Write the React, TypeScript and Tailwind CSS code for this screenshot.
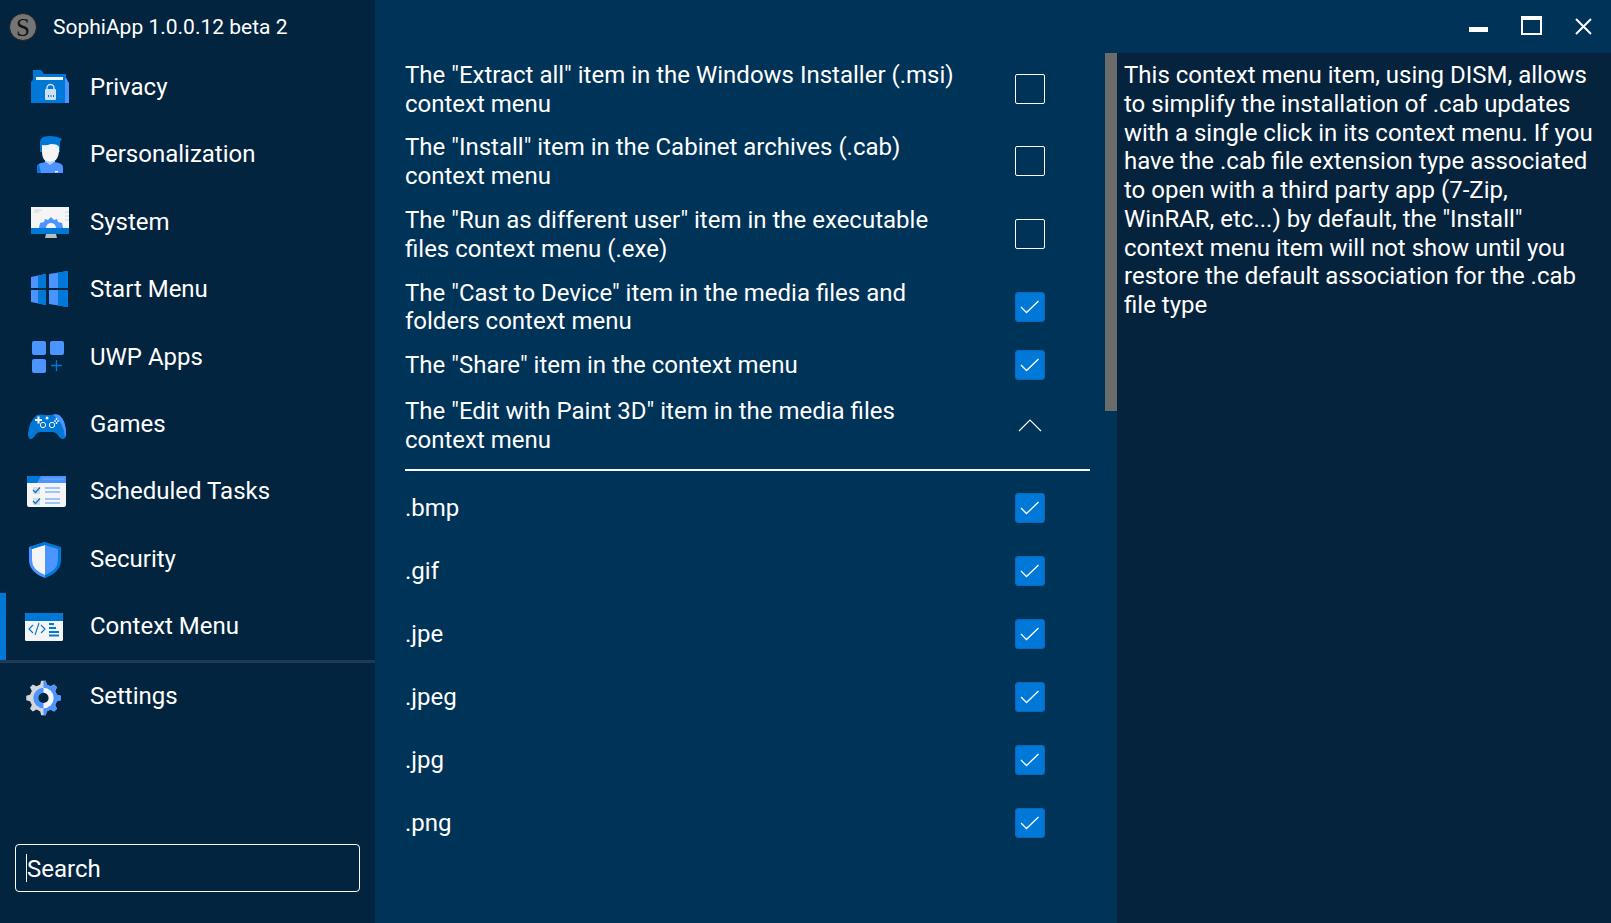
import React from 'react';

const BLUE = '#4c94ff';
const DARK = '#0078d7';
const LIGHT = '#f5f5f5';

const Svg = ({ children }: { children: React.ReactNode }) => (
  <svg width="48" height="48" viewBox="0 0 48 48" className="shrink-0">
    {children}
  </svg>
);

const PrivacyIcon = () => (
  <Svg>
    <path d="M12 7h8l3 4h22v12H12z" fill={DARK} />
    <rect x="15" y="14" width="27" height="4" fill={LIGHT} />
    <path d="M10 40V20q0-3 3-3h31v23z" fill={DARK} />
    <path d="M44 15h1l3 5v20h-4z" fill={BLUE} />
    <path d="M26 26v-1a3.500 3.500 0 0 1 7 0v1" fill="none" stroke="#cfe0f5" strokeWidth="1.400" />
    <rect x="24" y="26" width="11" height="11" rx="1" fill="#cfe0f5" />
    <rect x="27" y="32" width="1" height="2" fill={DARK} />
    <rect x="29.500" y="32" width="1" height="2" fill={DARK} />
    <rect x="32" y="32" width="1" height="2" fill={DARK} />
  </Svg>
);

const PersonIcon = () => (
  <Svg>
    <path d="M19 22v-10q0-6 9-6 8 0 13 3l-2 3v10z" fill={DARK} />
    <path d="M21 15q4 1 9-1 7 0 8 3v5q-1 9-8 11h-2q-7-2-7-11z" fill={LIGHT} />
    <path d="M24 30q5 3 10 0v4l-5 3-5-3z" fill="#b7d3f7" />
    <path d="M16 43v-5q0-4 4-5l5-1 4 3 4-3 5 1q4 1 4 5v5z" fill={BLUE} />
    <path d="M16 43v-5q0-3 2-4l2 9z" fill={DARK} />
    <rect x="34" y="41" width="3" height="1.500" fill={LIGHT} />
  </Svg>
);

const SystemIcon = () => (
  <Svg>
    <rect x="10" y="9" width="40" height="21" fill={LIGHT} />
    <rect x="10" y="30" width="40" height="6" fill={DARK} />
    <path d="M25 36h10l1 4H24z" fill="#bdbdbd" />
    <path d="M18 30l1-5 4-1 1-3 3 1 3-3 3 3 3-1 1 3 4 1 1 5z" fill={BLUE} />
    <path d="M25 30a5 5 0 0 1 10 0z" fill={LIGHT} />
    <path d="M13 12h8M13 14h5M44 14h4M44 18h4M44 22h4" stroke="#cccccc" strokeWidth="0.800" />
  </Svg>
);

const StartIcon = () => (
  <Svg>
    <path d="M10 12l15-3v14H10z" fill={BLUE} />
    <path d="M17 10.500l8-1.500v14h-8z" fill={DARK} />
    <path d="M28 9l19-3v17H28z" fill={BLUE} />
    <path d="M37 7.500l10-1.500v17H37z" fill={DARK} />
    <path d="M10 25h15v15l-15-3z" fill={BLUE} />
    <path d="M17 25h8v15l-8-1.500z" fill={DARK} />
    <path d="M28 25h19v17l-19-3z" fill={BLUE} />
    <path d="M37 25h10v17l-10-1.500z" fill={DARK} />
  </Svg>
);

const UwpIcon = () => (
  <Svg>
    <rect x="11" y="8" width="14" height="14" rx="2" fill={BLUE} />
    <rect x="29" y="8" width="14" height="14" rx="2" fill={BLUE} />
    <rect x="11" y="26" width="14" height="14" rx="2" fill={BLUE} />
    <path d="M35.500 27v11M30 32.500h11" stroke={DARK} strokeWidth="1.300" />
  </Svg>
);

const GamesIcon = () => (
  <Svg>
    <path d="M7 34q1-13 9-19 4-1 8 0h6q5-1 8 0 7 5 7 19 0 5-3 5-3 0-6-5-2-2-5-2H20q-3 0-5 2-3 5-5 5-3 0-3-5z" fill={DARK} />
    <path d="M32 14.500q3-.5 6 .5 7 5 7 19 0 2-1 3-1-14-12-22.500z" fill={BLUE} />
    <path d="M14 20h7M17.500 16.500v7" stroke={LIGHT} strokeWidth="2.200" />
    <circle cx="26" cy="18" r="1.500" fill={LIGHT} />
    <circle cx="22" cy="25" r="2.700" fill="none" stroke={LIGHT} strokeWidth="1" />
    <circle cx="31" cy="25" r="2.700" fill="none" stroke={LIGHT} strokeWidth="1" />
    <circle cx="34" cy="21" r="0.900" fill={LIGHT} />
    <circle cx="37" cy="21" r="0.900" fill={LIGHT} />
    <circle cx="35.500" cy="23" r="0.900" fill={LIGHT} />
    <circle cx="35.500" cy="19" r="0.900" fill={LIGHT} />
  </Svg>
);

const TasksIcon = () => (
  <Svg>
    <g transform="translate(0 1)">
      <rect x="6" y="8" width="39" height="31" rx="2" fill={LIGHT} />
      <path d="M6 15v-5q0-2 2-2h35q2 0 2 2v5z" fill={BLUE} />
      <path d="M6 15v-5q0-2 2-2h12l-4 7z" fill={DARK} />
      <path d="M22 11h21" stroke="#8dbcff" strokeWidth="0.700" />
      <rect x="12" y="19" width="7" height="7" fill="#dddddd" />
      <rect x="12" y="30" width="7" height="7" fill="#dddddd" />
      <path d="M12 22l2.500 2.500L19 19.500M12 33l2.500 2.500L19 30.500" fill="none" stroke={DARK} strokeWidth="1.300" />
      <path d="M24 20h15M24 24h15M24 31h15M24 35h15" stroke={BLUE} strokeWidth="1.100" />
    </g>
  </Svg>
);

const SecurityIcon = () => (
  <Svg>
    <g transform="translate(0 -1)">
      <path d="M24 8L8 13v13q0 12 16 18z" fill={BLUE} />
      <path d="M24 8l16 5v13q0 12-16 18z" fill={DARK} />
      <path d="M24 11l-13 4v11q0 10 13 15z" fill={LIGHT} />
      <path d="M24 11l13 4v11q0 10-13 15z" fill={BLUE} />
      <path d="M24 8L8 13l3 2 13-4z" fill={DARK} />
    </g>
  </Svg>
);

const ContextIcon = () => (
  <Svg>
    <rect x="4" y="11" width="38" height="28" rx="1.500" fill={LIGHT} />
    <path d="M4 19v-6.500q0-1.500 1.500-1.500h35q1.500 0 1.500 1.500V19z" fill={DARK} />
    <path d="M12 23l-4 4 4 4M20 23l4 4-4 4M18 21l-4 12" fill="none" stroke={DARK} strokeWidth="1.100" />
    <path d="M28 22h5M28 26h7M28 30h10M28 33.500h10" stroke={DARK} strokeWidth="2" />
  </Svg>
);

const SettingsIcon = () => (
  <Svg>
    <g transform="translate(-0.300 3.200) scale(0.930)">
      <path
        d="M22 6h5l1 4 4 2 4-2 3 3-2 4 2 4 4 1v5l-4 1-2 4 2 4-3 3-4-2-4 2-1 4h-5l-1-4-4-2-4 2-3-3 2-4-2-4-4-1v-5l4-1 2-4-2-4 3-3 4 2 4-2z"
        fill="#d6d6d6"
      />
      <path d="M24.500 6H27l1 4 4 2 4-2 3 3-2 4 2 4 4 1v5l-4 1-2 4 2 4-3 3-4-2-4 2-1 4h-2.500z" fill={BLUE} />
      <circle cx="24.500" cy="24.500" r="11" fill={LIGHT} />
      <path d="M24.500 13.500a11 11 0 0 0 0 22z" fill={BLUE} />
      <circle cx="24.500" cy="24.500" r="5.500" fill="#03243f" />
    </g>
  </Svg>
);

const menu = [
  { label: 'Privacy', icon: <PrivacyIcon /> },
  { label: 'Personalization', icon: <PersonIcon /> },
  { label: 'System', icon: <SystemIcon /> },
  { label: 'Start Menu', icon: <StartIcon /> },
  { label: 'UWP Apps', icon: <UwpIcon /> },
  { label: 'Games', icon: <GamesIcon /> },
  { label: 'Scheduled Tasks', icon: <TasksIcon /> },
  { label: 'Security', icon: <SecurityIcon /> },
  { label: 'Context Menu', icon: <ContextIcon /> },
];

const MenuRow = ({ label, icon, active }: { label: string; icon: React.ReactNode; active?: boolean }) => (
  <div className="relative flex h-[67.4px] items-center pl-[21px]">
    {active && <div className="absolute left-0 top-0 h-full w-[6px] bg-[#0078d7]" />}
    {icon}
    <span className="ml-[21px] text-[24px] text-white">{label}</span>
  </div>
);

const Checkbox = ({ checked }: { checked?: boolean }) =>
  checked ? (
    <div className="flex h-[30px] w-[30px] items-center justify-center rounded-[3px] border border-[#0a68b8] bg-[#0078d7]">
      <svg width="20" height="16" viewBox="0 0 20 16">
        <path d="M1 8l5.500 5.500L18.500 2" fill="none" stroke="#ffffff" strokeWidth="1.300" />
      </svg>
    </div>
  ) : (
    <div className="h-[30px] w-[30px] -translate-y-[1px] rounded-[2px] border border-white" />
  );

const settings = [
  { text: ['The "Extract all" item in the Windows Installer (.msi)', 'context menu'], checked: false },
  { text: ['The "Install" item in the Cabinet archives (.cab)', 'context menu'], checked: false },
  { text: ['The "Run as different user" item in the executable', 'files context menu (.exe)'], checked: false },
  { text: ['The "Cast to Device" item in the media files and', 'folders context menu'], checked: true },
  { text: ['The "Share" item in the context menu'], checked: true },
];

const extensions = ['.bmp', '.gif', '.jpe', '.jpeg', '.jpg', '.png'];

const App = () => {
  return (
    <div className="flex h-[923px] w-[1611px] overflow-hidden bg-[#003358] font-['Roboto',sans-serif] text-white">
      {/* Sidebar */}
      <aside className="flex w-[375px] shrink-0 flex-col bg-[#03243f]">
        <div className="flex h-[53.4px] items-center pl-[9px] pt-[1px]">
          <div className="flex h-[28px] w-[28px] items-center justify-center rounded-full border border-[#222222] bg-[#757575] font-['Liberation_Serif',serif] text-[25px] leading-none text-[#111111]">
            S
          </div>
          <span className="ml-[16px] translate-y-[1px] text-[21px]">SophiApp 1.0.0.12 beta 2</span>
        </div>
        {menu.map((item) => (
          <MenuRow key={item.label} label={item.label} icon={item.icon} active={item.label === 'Context Menu'} />
        ))}
        <div className="h-[2.6px] bg-[#1f3a54]" />
        <MenuRow label="Settings" icon={<SettingsIcon />} />
        <div className="mt-auto px-[15px] pb-[31px]">
          <div className="flex h-[48px] items-center rounded-[4px] border border-white pl-[10px] text-[24px]">
            <span className="h-[28px] w-px bg-white" />
            <span className="translate-y-[1px]">Search</span>
          </div>
        </div>
      </aside>

      <div className="flex min-w-0 flex-1 flex-col">
        {/* Window controls */}
        <div className="flex h-[53px] items-center justify-end pr-[17px]">
          <div className="mt-[1px] h-[5px] w-[19px] translate-y-[2px] bg-white" />
          <div className="ml-[33px] h-[19px] w-[21px] -translate-y-[1px] border-2 border-t-[4px] border-white" />
          <svg width="20" height="20" viewBox="0 0 20 20" className="ml-[32px]">
            <path d="M2 2l15 15M17 2L2 17" stroke="#ffffff" strokeWidth="2" />
          </svg>
        </div>

        <div className="flex min-h-0 flex-1">
          {/* Settings list */}
          <div className="flex-1 pl-[30px] pr-[15px] pt-[0.3px] text-[24px] leading-[28.7px]">
            {settings.map((s) => (
              <div key={s.text[0]} className={`flex items-center justify-between pr-[45px] ${s.text.length === 2 ? 'h-[72.6px]' : 'h-[43px]'}`}>
                <div className="whitespace-nowrap">
                  {s.text.map((line) => (
                    <div key={line}>{line}</div>
                  ))}
                </div>
                <Checkbox checked={s.checked} />
              </div>
            ))}
            <div className="flex h-[84px] items-center justify-between border-b-2 border-white pb-[4px] pr-[45px]">
              <div className="whitespace-nowrap">
                <div>The "Edit with Paint 3D" item in the media files</div>
                <div>context menu</div>
              </div>
              <svg width="30" height="16" viewBox="0 0 30 16" className="-translate-y-[1px]">
                <path d="M4 14L15 3l11 11" fill="none" stroke="#ffffff" strokeWidth="1.100" />
              </svg>
            </div>
            <div className="pt-[6.3px]">
              {extensions.map((ext) => (
                <div key={ext} className="flex h-[63px] items-center justify-between pr-[45px]">
                  <span>{ext}</span>
                  <Checkbox checked />
                </div>
              ))}
            </div>
          </div>

          {/* Scrollbar */}
          <div className="w-[12px] shrink-0">
            <div className="h-[358px] bg-[#6b6b6b]" />
          </div>

          {/* Description */}
          <div className="w-[494px] shrink-0 bg-[#05233c] pl-[7px] pr-[10px] pt-[8.3px] text-[24px] leading-[28.7px]">
            This context menu item, using DISM, allows to simplify the installation of .cab updates with a single click in its context menu. If you have the .cab file extension type associated to open with a third party app (7-Zip, WinRAR, etc...) by default, the "Install" context menu item will not show until you restore the default association for the .cab file type
          </div>
        </div>
      </div>
    </div>
  );
};

export default App;
